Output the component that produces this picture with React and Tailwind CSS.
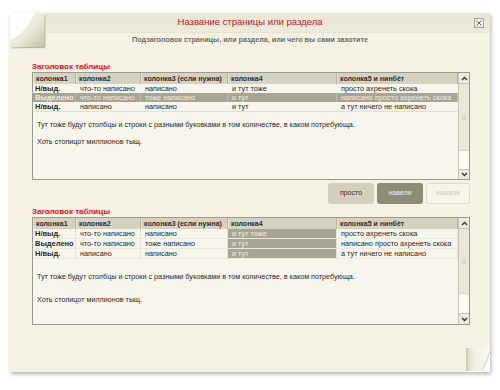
import React from "react";

const font = { fontFamily: '"Liberation Sans", Arial, sans-serif' };

const widths = ["w-[43px]", "w-[65px]", "w-[87px]", "w-[109px]", "w-[121px]"];
const headers = ["колонка1", "колонка2", "колонка3 (если нужна)", "колонка4", "колонка5 и нинбёт"];

const rows = [
  ["Н/выд.", "что-то написано", "написано", "и тут тоже", "просто ахренеть скока"],
  ["Выделено", "что-то написано", "тоже написано", "и тут", "написано просто ахренеть скока"],
  ["Н/выд.", "написано", "написано", "и тут", "а тут ничего не написано"],
];

const Chevron = ({ up }) => (
  <svg width="7" height="5" viewBox="0 0 7 5">
    <path
      d={up ? "M1 4 L3.5 1.5 L6 4" : "M1 1 L3.5 3.5 L6 1"}
      fill="none"
      stroke="#333"
      strokeWidth="1.3"
    />
  </svg>
);

const Scrollbar = ({ thumb, track }) => (
  <div className="flex w-[12px] flex-col border-l border-[#c9c6b6] bg-[#efede2]">
    <div className="flex h-[11px] items-center justify-center border-b border-[#c9c6b6] bg-[#ecebe1]">
      <Chevron up />
    </div>
    <div className={`${thumb} flex items-center justify-center border-b border-[#d6d3c4] bg-[#e9e7d8]`}>
      <div className="flex flex-col gap-[1px]">
        <div className="h-[1px] w-[4px] bg-[#d2cfbf]" />
        <div className="h-[1px] w-[4px] bg-[#d2cfbf]" />
        <div className="h-[1px] w-[4px] bg-[#d2cfbf]" />
      </div>
    </div>
    <div className={`${track} bg-[#fbfbf8]`} />
    <div className="flex flex-1 items-center justify-center border-t border-[#c9c6b6] bg-[#ecebe1]">
      <Chevron />
    </div>
  </div>
);

const Header = () => (
  <div className="flex h-[11px] bg-[#d5d2c1]">
    {headers.map((h, i) => (
      <div
        key={i}
        className={`${widths[i]} border-r border-[#b7b4a3] pl-[3px] text-[7px] font-bold leading-[11px] text-[#2f2f2f] shadow-[inset_1px_0_0_#e7e5d8]`}
      >
        {h}
      </div>
    ))}
  </div>
);

const FirstTable = () => (
  <div className="flex h-[108px] border border-[#9c9b93] bg-[#f8f6ec]">
    <div className="flex-1">
      <Header />
      {rows.map((r, ri) => {
        const sel = ri === 1;
        return (
          <div
            key={ri}
            className={`flex h-[9px] ${sel ? "bg-[#a8a594] text-[#eeede4]" : "text-[#262626]"} ${
              ri === 2 ? "border-b border-[#e3e0d2] h-[10px]" : ""
            }`}
          >
            {r.map((c, ci) => (
              <div
                key={ci}
                className={`${widths[ci]} overflow-hidden whitespace-nowrap leading-[9px] ${
                  ci === 0 ? "pl-[2px] text-[7.5px] font-bold" : "pl-[4px] text-[7.3px]"
                } ${sel ? "border-r border-[#bdbaa9]" : ""}`}
              >
                {c}
              </div>
            ))}
          </div>
        );
      })}
      <div className="pl-[4px] pt-[8px] text-[7.2px] leading-[10px] text-[#262626]">
        <p className="mb-[7px]">
          Тут тоже будут столбцы и строки с разными буковками в том количестве, в каком потребующа.
        </p>
        <p>Хоть стопицот миллионов тыщ.</p>
      </div>
    </div>
    <Scrollbar thumb="h-[67px]" track="h-[18px]" />
  </div>
);

const SecondTable = () => (
  <div className="flex h-[108px] border border-[#9c9b93] bg-[#f8f6ec]">
    <div className="flex-1">
      <Header />
      {rows.map((r, ri) => (
        <div key={ri} className="flex h-[10px] border-b border-[#ebe8dc] text-[#262626]">
          {r.map((c, ci) => (
            <div
              key={ci}
              className={`${widths[ci]} overflow-hidden whitespace-nowrap border-r border-[#e6e3d6] leading-[9px] ${
                ci === 0 ? "pl-[2px] text-[7.5px] font-bold" : "pl-[4px] text-[7.3px]"
              } ${ci === 3 ? "bg-[#a8a594] text-[#efeee6]" : ""}`}
            >
              {c}
            </div>
          ))}
        </div>
      ))}
      <div className="pl-[4px] pt-[13px] text-[7.2px] leading-[10px] text-[#262626]">
        <p className="mb-[13px]">
          Тут тоже будут столбцы и строки с разными буковками в том количестве, в каком потребующа.
        </p>
        <p>Хоть стопицот миллионов тыщ.</p>
      </div>
    </div>
    <Scrollbar thumb="h-[65px]" track="h-[19px]" />
  </div>
);

const CornerTop = () => (
  <svg className="absolute left-0 top-0" width="36" height="36" viewBox="0 0 36 36">
    <defs>
      <linearGradient id="flapA" x1="0" y1="0" x2="1" y2="1">
        <stop offset="0" stopColor="#fbfaf2" />
        <stop offset="0.55" stopColor="#ebe8d7" />
        <stop offset="1" stopColor="#c2bfab" />
      </linearGradient>
    </defs>
    <rect x="0" y="0" width="36" height="36" fill="#fff" />
    <path d="M25 0 L33 0 Q35 0 35 3 L35 33 Q35 35 33 35 L0 35 L0 27 Q14 22 25 0 Z" fill="url(#flapA)" />
    <path d="M35 2 L35 34 L2 35" fill="none" stroke="#b5b29e" strokeWidth="1" />
    <path d="M36 0 L36 36 L0 36" fill="none" stroke="#d9d6c6" strokeWidth="1" />
  </svg>
);

const CornerBottom = () => (
  <svg className="absolute bottom-0 right-0" width="24" height="24" viewBox="0 0 24 24">
    <defs>
      <linearGradient id="flapB" x1="0" y1="0" x2="1" y2="0">
        <stop offset="0" stopColor="#d8d5c2" />
        <stop offset="0.35" stopColor="#f2f0e4" />
        <stop offset="1" stopColor="#fbfaf3" />
      </linearGradient>
    </defs>
    <rect x="0" y="0" width="24" height="24" fill="#fff" />
    <path d="M0 0 L24 0 L24 3 Q21 14 16 23 L0 23 Z" fill="url(#flapB)" />
    <path d="M1 0 L1 23" stroke="#c4c1ae" strokeWidth="1" />
    <path d="M24 3 Q21 14 16 23" fill="none" stroke="#d4d1c0" strokeWidth="1" />
  </svg>
);

export default function App() {
  return (
    <div className="h-[390px] w-[500px] overflow-hidden bg-white pl-[10px] pt-[13px]" style={font}>
      <div className="relative h-[359px] w-[480px] bg-[#f5f2e3] shadow-[1px_2px_4px_rgba(0,0,0,0.3)]">
        <div className="flex h-[20px] items-center justify-center border-b border-[#e6e3d2] bg-gradient-to-b from-[#e9e6d4] to-[#eeebdb]">
          <span className="text-[9.5px] text-[#b11a2b]">Название страницы или раздела</span>
          <div className="absolute right-[6px] top-[5px] flex h-[10px] w-[10px] items-center justify-center border border-[#a9a697] bg-[#f2f0e6]">
            <svg width="6" height="6" viewBox="0 0 6 6">
              <path d="M0.5 0.5 L5.5 5.5 M5.5 0.5 L0.5 5.5" stroke="#666" strokeWidth="1" />
            </svg>
          </div>
        </div>
        <div className="mt-[1px] h-[12px] text-center text-[7.2px] font-bold leading-[12px] text-[#6e6d66]">
          Подзаголовок страницы, или раздела, или чего вы сами захотите
        </div>
        <div className="pl-[22px] pr-[20px]">
          <div className="mt-[16px] h-[10px] text-[8px] font-bold leading-[10px] text-[#e0101f]">Заголовок таблицы</div>
          <FirstTable />
          <div className="mt-[3px] flex h-[21px] justify-end gap-[3px]">
            <button className="w-[46px] rounded-[3px] bg-[#d2cfbd] text-[7px] text-[#333]">просто</button>
            <button className="w-[46px] rounded-[3px] bg-[#8e8b77] text-[7px] text-[#efeee6]">навели</button>
            <button className="w-[44px] rounded-[3px] border border-[#dedbcb] bg-[#f6f4e8] text-[7px] text-[#cdcab9]">
              нажали
            </button>
          </div>
          <div className="mt-[3px] h-[10px] text-[8px] font-bold leading-[10px] text-[#e0101f]">Заголовок таблицы</div>
          <SecondTable />
        </div>
        <CornerTop />
        <CornerBottom />
      </div>
    </div>
  );
}
